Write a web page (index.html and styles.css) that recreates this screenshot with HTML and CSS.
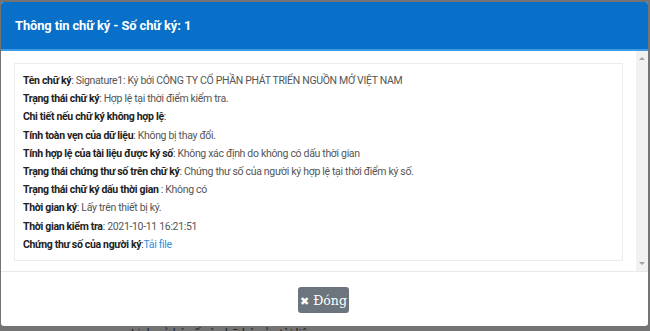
FILE: index.html
```html
<!DOCTYPE html>
<html lang="vi">
<head>
  <meta charset="UTF-8">
  <meta name="viewport" content="width=device-width, initial-scale=1.0">
  <title>Thông tin chữ ký</title>
  <link rel="stylesheet" href="styles.css">
</head>
<body>
  <div class="modal">
    <div class="modal-header">
      <h4>Thông tin chữ ký - Số chữ ký: 1</h4>
    </div>
    <div class="modal-body">
      <div class="scroll-content">
        <div class="sig-box">
          <p><b>Tên chữ ký</b>: Signature1: Ký bởi CÔNG TY CỔ PHẦN PHÁT TRIỂN NGUỒN MỞ VIỆT NAM</p>
          <p><b>Trạng thái chữ ký</b>: Hợp lệ tại thời điểm kiểm tra.</p>
          <p><b>Chi tiết nếu chữ ký không hợp lệ</b>:</p>
          <p><b>Tính toàn vẹn của dữ liệu</b>: Không bị thay đổi.</p>
          <p><b>Tính hợp lệ của tài liệu được ký số</b>: Không xác định do không có dấu thời gian</p>
          <p><b>Trạng thái chứng thư số trên chữ ký</b>: Chứng thư số của người ký hợp lệ tại thời điểm ký số.</p>
          <p><b>Trạng thái chữ ký dấu thời gian </b>: Không có</p>
          <p><b>Thời gian ký</b>: Lấy trên thiết bị ký.</p>
          <p><b>Thời gian kiểm tra</b>: 2021-10-11 16:21:51</p>
          <p><b>Chứng thư số của người ký</b>:<a href="#">Tải file</a></p>
        </div>
      </div>
      <div class="scrollbar">
        <span class="arrow up"></span>
        <span class="arrow down"></span>
      </div>
    </div>
    <div class="modal-footer">
      <button type="button"><span class="x">✖</span> Đóng</button>
    </div>
  </div>
  <div class="behind">Lịch sử ký số và chữ ký của tài liệu</div>
</body>
</html>
```

FILE: styles.css
```css
*{margin:0;padding:0;box-sizing:border-box;}
body{font-family:Roboto,"Noto Sans",sans-serif;color:#333;background:#737373;padding:2px 2px 0 1px;height:331px;overflow:hidden;}
.modal{background:#fff;border-radius:3px;overflow:hidden;height:324px;}
.modal-header{background:#0870c8;border-bottom:2px solid #3d9be6;height:49px;padding:0 14px;display:flex;align-items:center;}
.modal-header h4{color:#fff;font-size:12.9px;font-weight:700;letter-spacing:-0.1px;}
.modal-body{height:221px;display:flex;border-bottom:1px solid #e9e9e9;}
.scroll-content{flex:1;padding:12px 13px 10px 13px;}
.scrollbar{width:12px;background:#f1f1f1;display:flex;flex-direction:column;justify-content:space-between;align-items:center;padding:6px 0;}
.arrow{width:0;height:0;border-left:3px solid transparent;border-right:3px solid transparent;}
.arrow.up{border-bottom:3px solid #a3a3a3;}
.arrow.down{border-top:3px solid #a3a3a3;}
.sig-box{border:1px solid #ececec;padding:8px 8px 6px 8px;}
.sig-box p{font-size:10.5px;line-height:18.2px;letter-spacing:-0.32px;color:#555;white-space:nowrap;}
.sig-box b{color:#222;font-weight:700;}
.sig-box a{color:#2a8ee0;text-decoration:none;}
.modal-footer{display:flex;justify-content:center;padding-top:15px;padding-right:2px;}
.modal-footer button{background:#6c757d;color:#fff;border:none;border-radius:3px;font-family:"DejaVu Serif",serif;font-size:12.5px;height:26px;width:51px;padding:0;}
.modal-footer .x{font-family:"DejaVu Sans",sans-serif;font-size:11px;}
.behind{font-size:12px;color:#222;padding:1px 0 0 130px;}
```
